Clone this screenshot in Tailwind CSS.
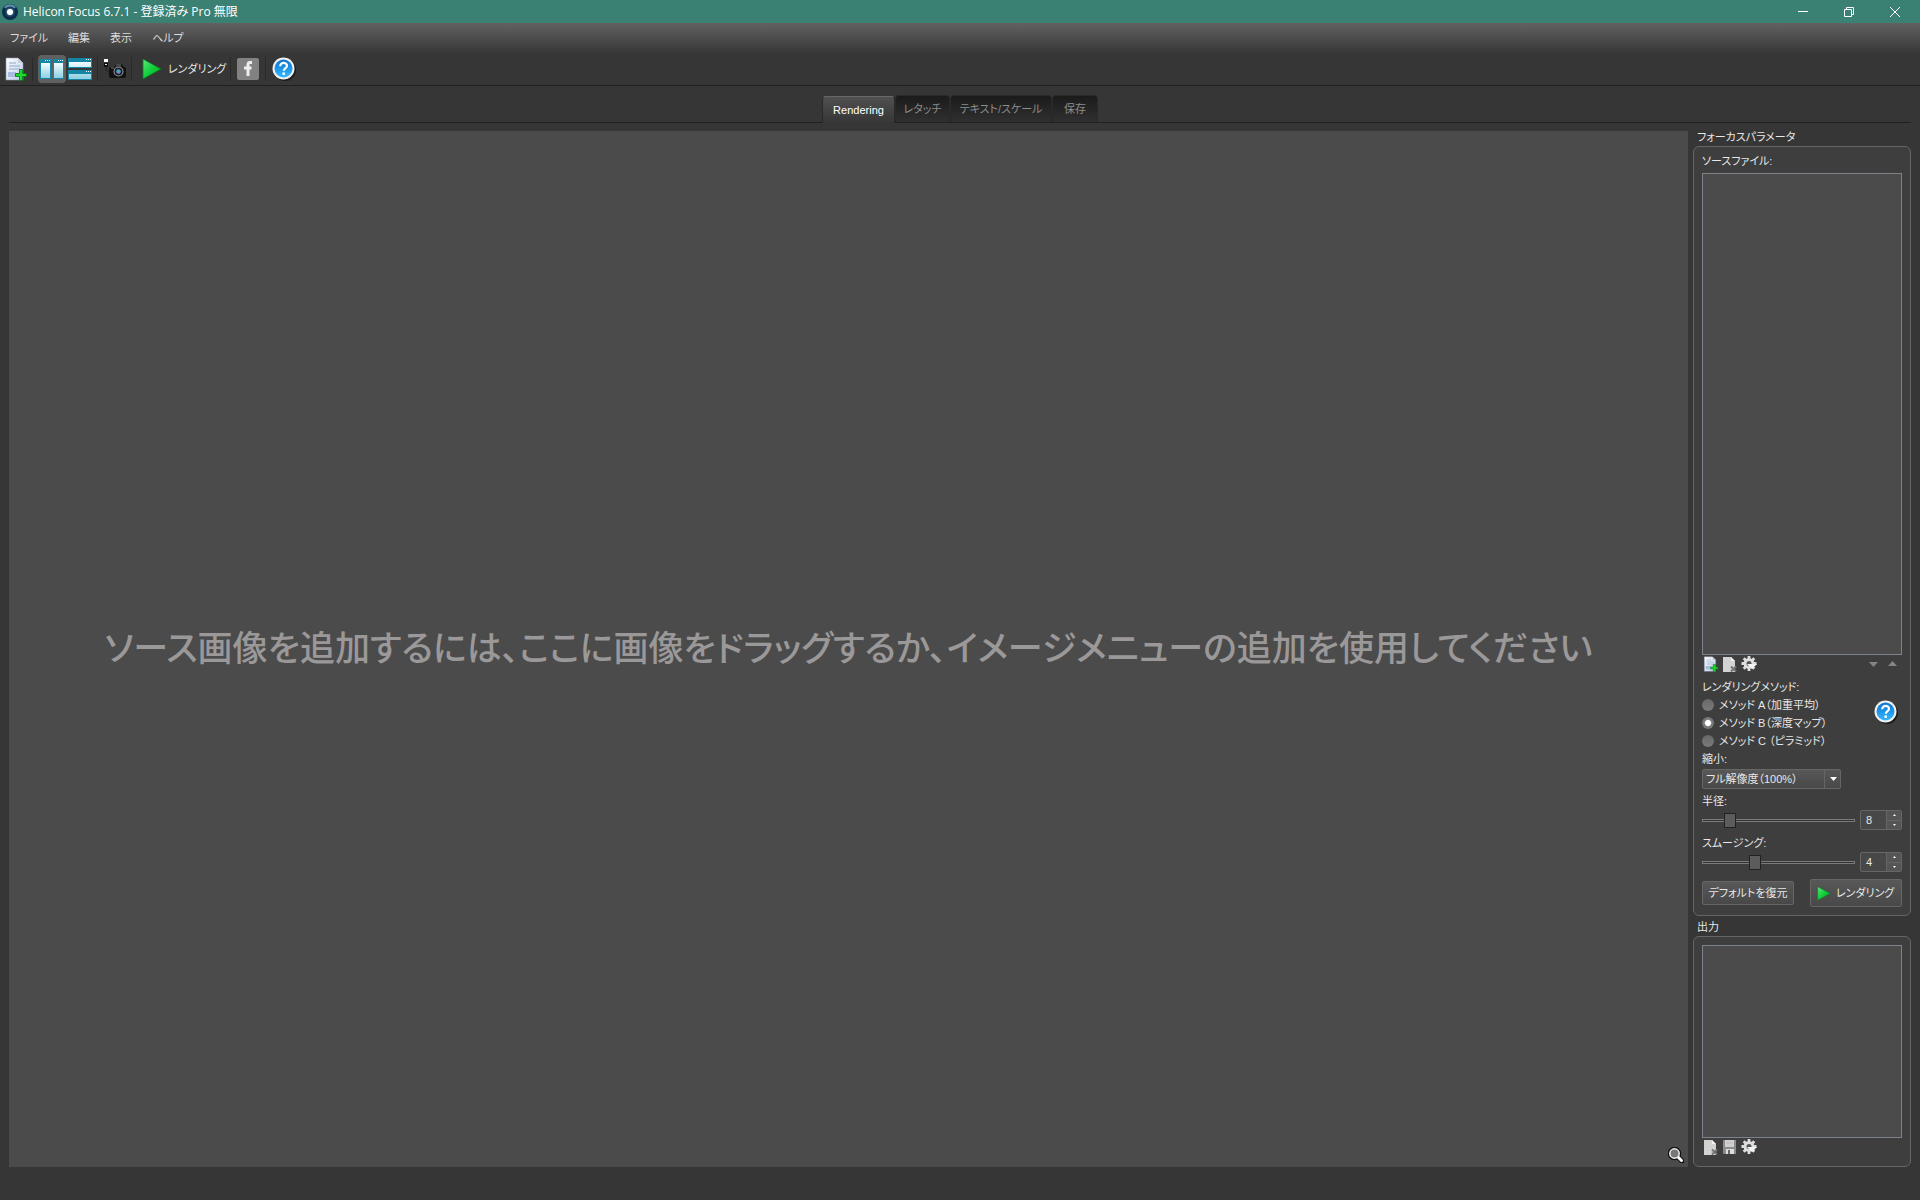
<!DOCTYPE html>
<html lang="ja">
<head>
  <meta charset="UTF-8">
  <meta name="viewport" content="width=device-width, initial-scale=1">
  <title>Helicon Focus 6.7.1 - 登録済み Pro 無限</title>
  <script src="https://cdn.jsdelivr.net/npm/@tailwindcss/browser@4"></script>
</head>
<body class="min-h-screen flex flex-col bg-[#363636] text-[#e8e8e8] text-[11px] leading-[18px] font-['Liberation_Sans','Noto_Sans_CJK_JP',sans-serif] [font-feature-settings:'palt']">

  <!-- shared icons -->
  <svg class="absolute size-0">
    <defs>
      <linearGradient id="green" x1="0" y1="0" x2="1" y2="1"><stop offset="0" stop-color="#5fe87c"/><stop offset=".5" stop-color="#10cf3c"/><stop offset="1" stop-color="#049c22"/></linearGradient>
      <linearGradient id="paper" x1="0" y1="0" x2="1" y2="1"><stop offset="0" stop-color="#fff"/><stop offset="1" stop-color="#b9cbe6"/></linearGradient>
      <linearGradient id="pane" x1="0" y1="0" x2="0" y2="1"><stop offset="0" stop-color="#f2fcff"/><stop offset="1" stop-color="#8ccfe2"/></linearGradient>
      <linearGradient id="blue" x1="0" y1="0" x2="0" y2="1"><stop offset="0" stop-color="#0b74cf"/><stop offset="1" stop-color="#35b8ff"/></linearGradient>
      <radialGradient id="lens"><stop offset=".3" stop-color="#fff"/><stop offset=".5" stop-color="#3e6f93"/><stop offset="1" stop-color="#0a2843"/></radialGradient>
    </defs>
    <symbol id="add-page" viewBox="0 0 22 24">
      <path d="M1 1h12l5 5v17H1z" fill="url(#paper)" stroke="#8d99b5" stroke-width=".6"/>
      <path d="M13 1v5h5z" fill="#c8d2e4"/>
      <path d="M4 6h7M4 9h11M4 12h11" stroke="#aebfdc" stroke-width="1.4"/>
      <path d="M3 15h8v5H3z" fill="#a8bce0"/>
      <path d="M14.500 12.500h3v4h4v3h-4v4h-3v-4h-4v-3h4z" fill="#19dd29" stroke="#086b14" stroke-width=".8"/>
    </symbol>
    <symbol id="remove-page" viewBox="0 0 16 16">
      <path d="M1 1h8l4 4v11H1z" fill="#d2d2d2"/>
      <path d="M9 1v4h4z" fill="#f2f2f2"/>
      <path d="M9 10.500l5 5M14 10.500l-5 5" stroke="#757575" stroke-width="2"/>
    </symbol>
    <symbol id="gear" viewBox="0 0 16 16">
      <path d="M8 0v15M.5 7.500h15M2.700 2.200l10.600 10.600M13.300 2.200L2.700 12.800" stroke="#dedede" stroke-width="2.800"/>
      <circle cx="8" cy="7.500" r="4" fill="none" stroke="#dedede" stroke-width="2.800"/>
      <circle cx="8" cy="7.500" r="2.500" fill="#555"/>
      <path d="M6 8h10l-5 5z" fill="#f4f4f4"/>
    </symbol>
    <symbol id="help" viewBox="0 0 24 24">
      <circle cx="13" cy="13" r="11" fill="#1c1c1c"/>
      <circle cx="11.500" cy="11.500" r="11" fill="#f1f1f1"/>
      <circle cx="11.500" cy="11.500" r="9" fill="url(#blue)"/>
      <path d="M8.200 9.300c0-4.700 6.800-4.200 6.800-.5 0 2.500-3.200 2.200-3.200 5" fill="none" stroke="#fff" stroke-width="2.200"/>
      <circle cx="11.700" cy="16.700" r="1.400" fill="#fff"/>
    </symbol>
    <symbol id="play" viewBox="0 0 20 22">
      <path d="M1 1l18 10L1 21z" fill="url(#green)" stroke="#087c1d" stroke-width=".8"/>
    </symbol>
  </svg>

  <header>
    <div class="h-[23px] bg-[#3a8073] flex items-center pl-[2px] pr-[2px]">
      <svg class="size-4" viewBox="0 0 16 16"><circle cx="8" cy="8" r="8" fill="#0b2f4d"/><path d="M2 3a8 8 0 0 1 12 0L8 8z" fill="#5f8fae"/><circle cx="8" cy="8" r="5.500" fill="url(#lens)"/><circle cx="8" cy="8" r="3" fill="#fff"/></svg>
      <h1 class="ml-[5px] text-[12px] text-white font-['Open_Sans','Noto_Sans_CJK_JP',sans-serif]">Helicon Focus 6.7.1 - 登録済み Pro 無限</h1>
      <div class="ml-auto flex h-full">
        <button aria-label="最小化" class="w-[46px] grid place-items-center"><svg class="size-[10px]" viewBox="0 0 10 10"><path d="M0 4.500h10" stroke="#fff"/></svg></button>
        <button aria-label="元に戻す" class="w-[46px] grid place-items-center"><svg class="size-[10px]" viewBox="0 0 10 10" fill="none" stroke="#fff"><path d="M.5 2.500h7v7h-7zM2.500 2.500v-2h7v7h-2"/></svg></button>
        <button aria-label="閉じる" class="w-[46px] grid place-items-center"><svg class="size-[10px]" viewBox="0 0 10 10"><path d="M0 0l10 10M10 0L0 10" stroke="#fff"/></svg></button>
      </div>
    </div>

    <nav class="h-[31px] pl-[10px] pb-[2px] flex items-center gap-5 bg-linear-to-b from-[#626262] to-[#363636] text-[#dcdcdc]">
      <button>ファイル</button>
      <button>編集</button>
      <button>表示</button>
      <button>ヘルプ</button>
    </nav>

    <div class="h-8 pl-[5px] pb-px flex items-center border-b border-[#202020]">
      <button aria-label="追加" class="w-[22px]"><svg class="w-[22px] h-6"><use href="#add-page"/></svg></button>
      <span class="mx-[5px] h-6 w-px bg-[#2a2a2a]"></span>
      <button aria-label="左右に並べる" class="w-7 h-[28px] rounded-sm bg-[#606060] grid place-items-center">
        <svg class="w-6 h-5" viewBox="0 0 24 20"><path d="M0 0h11v20H0zM13 0h11v20H13z" fill="#1585a5"/><path d="M1 4h9v15H1zM14 4h9v15h-9z" fill="url(#pane)"/><path d="M5 1.500h5M18 1.500h5" stroke="#fff" stroke-dasharray="1 1"/></svg>
      </button>
      <button aria-label="上下に並べる" class="w-[28px] h-[28px] grid place-items-center">
        <svg class="w-6 h-[22px]" viewBox="0 0 24 22"><path d="M0 0h24v10H0zM0 12h24v10H0z" fill="#1585a5"/><path d="M1 4h22v5H1zM1 16h22v5H1z" fill="url(#pane)"/><path d="M18 1.500h5M18 13.500h5" stroke="#fff" stroke-dasharray="1 1"/></svg>
      </button>
      <span class="mx-[3px] h-6 w-px bg-[#2a2a2a]"></span>
      <button aria-label="リモート撮影" class="ml-[2px] w-6">
        <svg class="w-6 h-6" viewBox="0 0 24 24"><path d="M1 2h4v3H1z" fill="#fff"/><path d="M1 6h4v4H1z" fill="#111"/><path d="M2 7h2v1H2z" fill="#ddd"/><path d="M3 10v3l3 2" stroke="#222" fill="none"/><rect x="6" y="10" width="17" height="11" rx="2" fill="#111"/><path d="M11 10l2-3h6l2 3z" fill="#191919"/><path d="M8 11h3M13 8h5" stroke="#777"/><circle cx="15.500" cy="14.500" r="5" fill="#9a9a9a"/><circle cx="15.500" cy="14.500" r="4" fill="#18202e"/><circle cx="15.500" cy="14.500" r="2.300" fill="#4e9fc0"/><path d="M14 15l3 1" stroke="#c75fd1"/></svg>
      </button>
      <span class="mx-[4px] h-6 w-px bg-[#2a2a2a]"></span>
      <button class="ml-[6px] flex items-center gap-[6px]"><svg class="w-5 h-[22px]"><use href="#play"/></svg>レンダリング</button>
      <span class="ml-[4px] mr-[6px] h-6 w-px bg-[#2a2a2a]"></span>
      <button aria-label="Facebook" class="w-[22px]"><svg class="size-[22px]" viewBox="0 0 22 22"><rect width="22" height="22" rx="2" fill="#828282"/><path d="M15 4.500h-2c-1.500 0-2 .8-2 2.500v11M7 10h7.500" stroke="#eee" stroke-width="3" fill="none"/></svg></button>
      <span class="mx-[6px] h-6 w-px bg-[#2a2a2a]"></span>
      <button aria-label="ヘルプ" class="w-6"><svg class="size-6"><use href="#help"/></svg></button>
    </div>
  </header>

  <div role="tablist" class="mx-[9px] pt-[9px] flex justify-center border-b border-[#202020] text-[#8c8c8c]">
    <button role="tab" aria-selected="true" class="-mb-px mt-px h-[27px] w-[73px] rounded-t border border-b-0 border-[#292929] border-t-[#686868] bg-linear-to-b from-[#505050] to-[#363636] text-white">Rendering</button>
    <button role="tab" class="h-[27px] w-[55px] rounded-t border border-b-0 border-[#292929] bg-linear-to-b from-[#1b1b1b] to-[#303030]">レタッチ</button>
    <button role="tab" class="h-[27px] w-[102px] rounded-t border border-b-0 border-[#292929] bg-linear-to-b from-[#1b1b1b] to-[#303030]">テキスト/スケール</button>
    <button role="tab" class="h-[27px] w-[46px] rounded-t border border-b-0 border-[#292929] bg-linear-to-b from-[#1b1b1b] to-[#303030]">保存</button>
  </div>

  <div class="flex-1 flex gap-[5px] pl-[9px] pr-[9px] pb-[33px]">
    <main class="relative flex-1 mt-2 bg-[#4b4b4b] grid place-items-center">
      <p class="text-[35px] leading-[48px] font-medium text-[#9a9898] whitespace-nowrap">ソース画像を追加するには、ここに画像をドラッグするか、イメージメニューの追加を使用してください</p>
      <button aria-label="拡大" class="absolute right-1 bottom-1">
        <svg class="size-4" viewBox="0 0 16 16"><path d="M9 9l5 5" stroke="#111" stroke-width="5" stroke-linecap="round"/><circle cx="6.500" cy="6.500" r="5" fill="#777" stroke="#111" stroke-width="3.500"/><path d="M9.500 9.500l4 4" stroke="#fff" stroke-width="3" stroke-linecap="round"/><circle cx="6.500" cy="6.500" r="4.700" fill="#777" stroke="#eee" stroke-width="1.500"/></svg>
      </button>
    </main>

    <aside class="w-[218px] flex flex-col">
      <h2 class="mt-[5px] pl-1">フォーカスパラメータ</h2>
      <section class="flex-1 flex flex-col rounded-md border border-[#666] bg-[#3e3e3e] px-2 pt-[5px] pb-2">
        <h3>ソースファイル:</h3>
        <div class="flex-1 mt-[3px] border border-[#7c828a] bg-[#4b4b4b]"></div>
        <div class="h-[23px] pl-px pt-[1px] flex items-start gap-[3px]">
          <button aria-label="追加"><svg class="w-4 h-4"><use href="#add-page"/></svg></button>
          <button aria-label="削除"><svg class="w-4 h-4"><use href="#remove-page"/></svg></button>
          <button aria-label="設定"><svg class="w-4 h-4"><use href="#gear"/></svg></button>
          <button aria-label="下へ" class="ml-auto mt-[6px]"><svg class="w-[9px] h-[5px]" viewBox="0 0 9 5"><path d="M0 0h9L4.500 5z" fill="#858585"/></svg></button>
          <button aria-label="上へ" class="ml-[7px] mr-[5px] mt-[5px]"><svg class="w-[9px] h-[5px]" viewBox="0 0 9 5"><path d="M0 5h9L4.500 0z" fill="#858585"/></svg></button>
        </div>
        <fieldset class="relative">
          <legend>レンダリングメソッド:</legend>
          <label class="flex items-center gap-[5px]"><input type="radio" name="method" class="appearance-none size-3 rounded-full bg-linear-to-b from-[#686868] to-[#7a7a7a] checked:bg-radial checked:from-white checked:from-30% checked:to-[#777] checked:to-45%">メソッド A（加重平均）</label>
          <label class="flex items-center gap-[5px]"><input type="radio" name="method" checked class="appearance-none size-3 rounded-full bg-linear-to-b from-[#686868] to-[#7a7a7a] checked:bg-radial checked:from-white checked:from-30% checked:to-[#777] checked:to-45%">メソッド B（深度マップ）</label>
          <label class="flex items-center gap-[5px]"><input type="radio" name="method" class="appearance-none size-3 rounded-full bg-linear-to-b from-[#686868] to-[#7a7a7a] checked:bg-radial checked:from-white checked:from-30% checked:to-[#777] checked:to-45%">メソッド C （ピラミッド）</label>
          <button aria-label="メソッドのヘルプ" class="absolute right-1 top-1"><svg class="size-6"><use href="#help"/></svg></button>
        </fieldset>
        <label for="scale">縮小:</label>
        <div class="relative mt-px w-[139px] h-5">
          <select id="scale" class="appearance-none block w-full h-5 pl-[3px] text-[11px] leading-[18px] rounded-xs border border-[#666] bg-linear-to-b from-[#585858] to-[#484848]"><option>フル解像度（100%）</option></select>
          <span class="absolute right-0 top-0 w-[17px] h-5 border-l border-[#666] grid place-items-center pointer-events-none"><svg class="w-[7px] h-1" viewBox="0 0 7 4"><path d="M0 0h7L3.500 4z" fill="#fff"/></svg></span>
        </div>

        <label for="radius" class="mt-[3px]">半径:</label>
        <div class="flex items-center justify-between">
          <input id="radius" type="range" min="1" max="48" value="8" class="appearance-none w-[153px] h-[3px] bg-[#333] border border-[#7a7a7a] [&::-webkit-slider-thumb]:appearance-none [&::-webkit-slider-thumb]:w-3 [&::-webkit-slider-thumb]:h-[15px] [&::-webkit-slider-thumb]:border [&::-webkit-slider-thumb]:border-[#222] [&::-webkit-slider-thumb]:bg-[#5c5c5c]">
          <div class="flex w-[42px] h-5 rounded-xs border border-[#666] bg-[#484848]">
            <input aria-label="半径の値" type="text" value="8" class="w-[25px] pl-[5px] text-[11px]">
            <div class="flex-1 flex flex-col border-l border-[#666] bg-[#555]">
              <button aria-label="増やす" class="flex-1 grid place-items-center border-b border-[#666]"><svg class="w-[3px] h-[2px]" viewBox="0 0 3 2"><path d="M0 2L1.500 0 3 2z" fill="#fff"/></svg></button>
              <button aria-label="減らす" class="flex-1 grid place-items-center"><svg class="w-[3px] h-[2px]" viewBox="0 0 3 2"><path d="M0 0l1.500 2L3 0z" fill="#fff"/></svg></button>
            </div>
          </div>
        </div>

        <label for="smoothing" class="mt-1">スムージング:</label>
        <div class="flex items-center justify-between">
          <input id="smoothing" type="range" min="1" max="10" value="4" class="appearance-none w-[153px] h-[3px] bg-[#333] border border-[#7a7a7a] [&::-webkit-slider-thumb]:appearance-none [&::-webkit-slider-thumb]:w-3 [&::-webkit-slider-thumb]:h-[15px] [&::-webkit-slider-thumb]:border [&::-webkit-slider-thumb]:border-[#222] [&::-webkit-slider-thumb]:bg-[#5c5c5c]">
          <div class="flex w-[42px] h-5 rounded-xs border border-[#666] bg-[#484848]">
            <input aria-label="スムージングの値" type="text" value="4" class="w-[25px] pl-[5px] text-[11px]">
            <div class="flex-1 flex flex-col border-l border-[#666] bg-[#555]">
              <button aria-label="増やす" class="flex-1 grid place-items-center border-b border-[#666]"><svg class="w-[3px] h-[2px]" viewBox="0 0 3 2"><path d="M0 2L1.500 0 3 2z" fill="#fff"/></svg></button>
              <button aria-label="減らす" class="flex-1 grid place-items-center"><svg class="w-[3px] h-[2px]" viewBox="0 0 3 2"><path d="M0 0l1.500 2L3 0z" fill="#fff"/></svg></button>
            </div>
          </div>
        </div>

        <div class="mt-[7px] flex items-center justify-between">
          <button class="w-[92px] h-6 rounded-xs border border-[#666] bg-linear-to-b from-[#585858] to-[#484848]">デフォルトを復元</button>
          <button class="w-[92px] h-7 pl-[6px] rounded-xs border border-[#666] bg-linear-to-b from-[#585858] to-[#484848] flex items-center gap-[5px]"><svg class="w-[14px] h-[15px]" viewBox="0 0 20 22" preserveAspectRatio="none"><path d="M1 1l18 10L1 21z" fill="url(#green)" stroke="#087c1d" stroke-width=".8"/></svg>レンダリング</button>
        </div>
      </section>

      <h2 class="mt-[2px] pl-1">出力</h2>
      <section class="rounded-md border border-[#666] bg-[#3e3e3e] px-2 pt-2 pb-[11px]">
        <div class="h-[193px] border border-[#7c828a] bg-[#4b4b4b]"></div>
        <div class="pl-px pt-[1px] flex gap-[3px]">
          <button aria-label="削除"><svg class="w-4 h-4"><use href="#remove-page"/></svg></button>
          <button aria-label="保存"><svg class="w-4 h-4" viewBox="0 0 16 16"><path d="M1 1h13v14H2l-1-1z" fill="#8c8c8c"/><path d="M3 1h9v7H3z" fill="#d0d0d0"/><path d="M4 4h7" stroke="#bbb"/><path d="M4 10h8v5H4z" fill="#ddd"/><path d="M6 11h2v4H6z" fill="#666"/></svg></button>
          <button aria-label="設定"><svg class="w-4 h-4"><use href="#gear"/></svg></button>
        </div>
      </section>
    </aside>
  </div>
</body>
</html>
